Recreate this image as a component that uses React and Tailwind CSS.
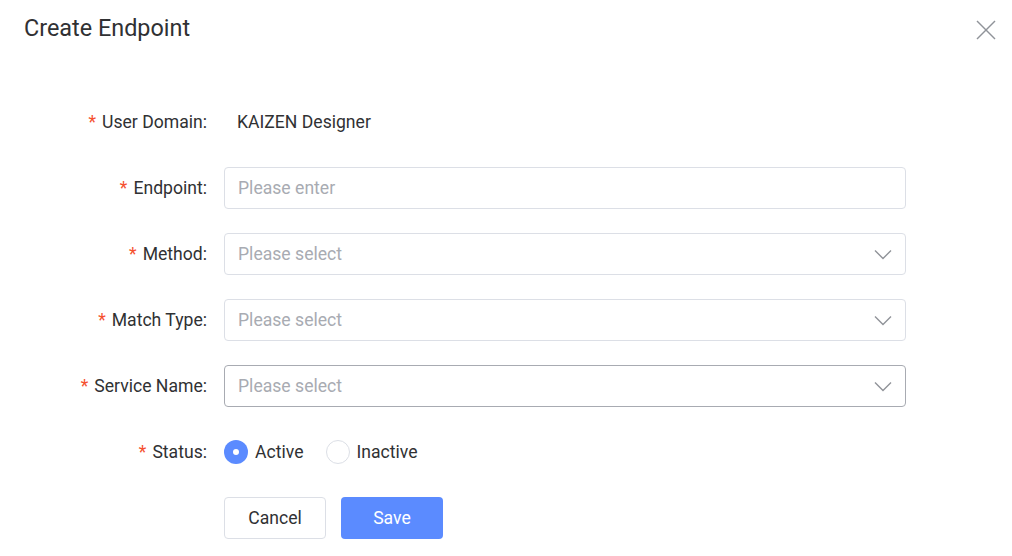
const font = { fontFamily: 'Roboto, "Liberation Sans", sans-serif' };

function Label({ children }) {
  return (
    <div className="w-[207px] pr-[17px] text-right text-[17.6px] text-[#303133] shrink-0 box-content">
      <span className="text-[#f5502f] mr-[6px]">*</span>
      {children}
    </div>
  );
}

function Chevron() {
  return (
    <svg width="18" height="11" viewBox="0 0 18 11" fill="none" stroke="#909399" strokeWidth="1.4">
      <polyline points="1,1.5 9,9.5 17,1.5" />
    </svg>
  );
}

function Select({ hover }) {
  return (
    <div className={`w-[682px] h-[42px] rounded-[4px] border flex items-center justify-between pl-[13px] pr-[13px] ${hover ? 'border-[#a8abb2]' : 'border-[#dcdfe6]'}`}>
      <span className="text-[17.6px] text-[#a8abb2]">Please select</span>
      <Chevron />
    </div>
  );
}

export default function App() {
  return (
    <div className="w-[1012px] h-[556px] bg-white relative" style={font}>
      <div className="flex items-center justify-between pl-6 pr-[16px] pt-[14px]">
        <h1 className="text-[23.4px] text-[#303133] leading-[28px]">Create Endpoint</h1>
        <svg width="20" height="20" viewBox="0 0 20 20" stroke="#909399" strokeWidth="1.4" className="mt-[4px]">
          <line x1="1" y1="1" x2="19" y2="19" />
          <line x1="19" y1="1" x2="1" y2="19" />
        </svg>
      </div>

      <div className="pt-[73px] space-y-6">
        <div className="flex items-center h-[42px] -mt-[14px]">
          <Label>User Domain:</Label>
          <span className="text-[17.6px] text-[#303133] ml-[13px]">KAIZEN Designer</span>
        </div>

        <div className="flex items-center">
          <Label>Endpoint:</Label>
          <div className="w-[682px] h-[42px] rounded-[4px] border border-[#dcdfe6] flex items-center pl-[13px]">
            <span className="text-[17.6px] text-[#a8abb2]">Please enter</span>
          </div>
        </div>

        <div className="flex items-center">
          <Label>Method:</Label>
          <Select />
        </div>

        <div className="flex items-center">
          <Label>Match Type:</Label>
          <Select />
        </div>

        <div className="flex items-center">
          <Label>Service Name:</Label>
          <Select hover />
        </div>

        <div className="flex items-center h-[42px]">
          <Label>Status:</Label>
          <div className="flex items-center gap-[7px]">
            <span className="w-[24px] h-[24px] rounded-full bg-[#5b8bff] flex items-center justify-center">
              <span className="w-[6px] h-[6px] rounded-full bg-white" />
            </span>
            <span className="text-[17.6px] text-[#303133]">Active</span>
          </div>
          <div className="flex items-center gap-[6px] ml-[23px]">
            <span className="w-[24px] h-[24px] rounded-full border border-[#dcdfe6]" />
            <span className="text-[17.6px] text-[#303133]">Inactive</span>
          </div>
        </div>

        <div className="flex items-center gap-[15px] pl-[224px]">
          <button className="w-[102px] h-[42px] rounded-[4px] border border-[#dcdfe6] text-[17.6px] text-[#303133] bg-white">Cancel</button>
          <button className="w-[102px] h-[42px] rounded-[4px] bg-[#5b8bff] text-[17.6px] text-white">Save</button>
        </div>
      </div>
    </div>
  );
}
